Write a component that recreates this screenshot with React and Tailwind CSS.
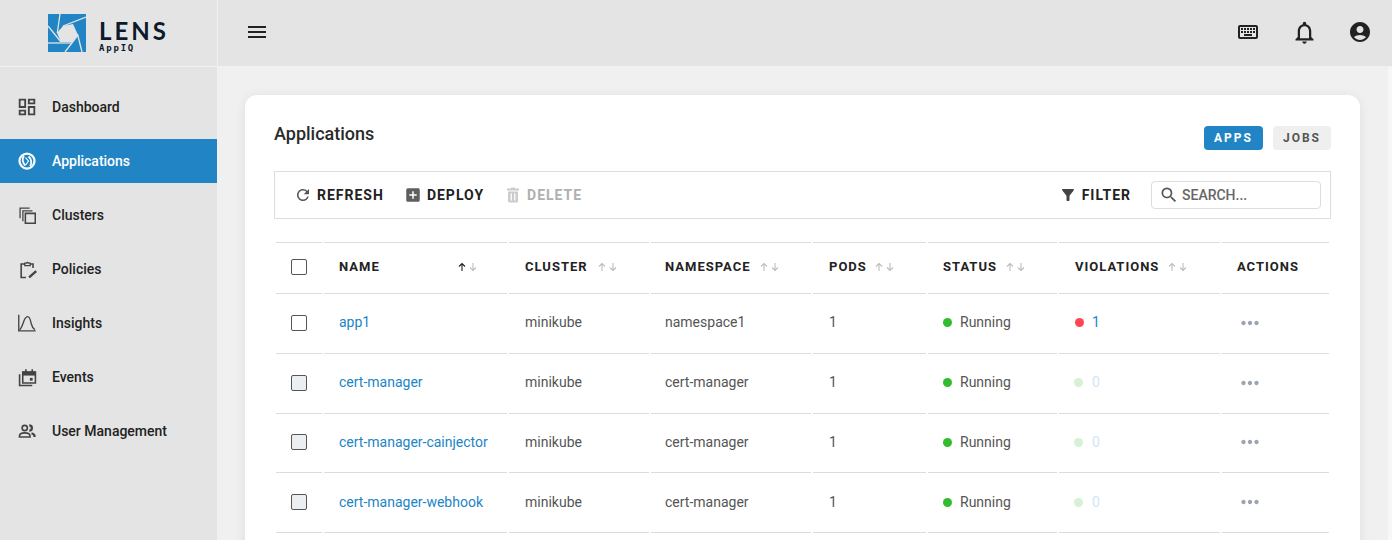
import {
  MdOutlineDashboard,
  MdMenu,
  MdOutlineKeyboard,
  MdNotificationsNone,
  MdAccountCircle,
  MdRefresh,
  MdAddBox,
  MdFilterAlt,
  MdSearch,
  MdMoreHoriz,
} from "react-icons/md";

function AppsIcon({ className }) {
  return (
    <svg viewBox="0 0 24 24" className={className} fill="none" stroke="currentColor">
      <circle cx="12" cy="12" r="10" strokeWidth="3" />
      <path d="M8 5.500C5 9 6 15 10 18M16 18.500c3-3.500 2-9.500-2-12.500" strokeWidth="2.400" />
      <path d="M10 7.500 14 12l-3.500 5" strokeWidth="1.500" />
    </svg>
  );
}

function ClustersIcon({ className }) {
  return (
    <svg viewBox="0 0 24 24" className={className} fill="none" stroke="currentColor" strokeWidth="1.800">
      <path d="M9 9h14v14H9z" strokeWidth="2.200" />
      <path d="M5.500 20V5.500H19" />
      <path d="M1.500 16V1.500H15" />
    </svg>
  );
}

function PoliciesIcon({ className }) {
  return (
    <svg viewBox="0 0 24 24" className={className} fill="none" stroke="currentColor" strokeWidth="2">
      <path d="M19 10V5h-4M9 5H4v17h6" />
      <path d="M8.500 7V4H11a1 1 0 0 1 2 0h2.500v3z" strokeWidth="1.500" />
      <path d="m14 22 9-8" strokeWidth="3" />
    </svg>
  );
}

function InsightsIcon({ className }) {
  return (
    <svg viewBox="0 0 24 24" className={className} fill="none" stroke="currentColor" strokeWidth="1.800">
      <path d="M1 1v21.500h22.500" />
      <path d="M2 21c3-2 4-7 6-12 1.200-3 2.700-5.500 5-5.500 2.800 0 3.700 5.500 4.700 9.500 .7 3 2 6 4.800 8" />
    </svg>
  );
}

function EventsIcon({ className }) {
  return (
    <svg viewBox="0 0 24 24" className={className} fill="none" stroke="currentColor">
      <path d="M6 5h16v14H6z" strokeWidth="2" />
      <path d="M6 5h16v4H6z" fill="currentColor" strokeWidth="1" />
      <path d="M10 1.500V5M18 1.500V5" strokeWidth="2" />
      <path d="M2 8v14h16" strokeWidth="2" />
      <rect x="15" y="12.500" width="3.500" height="3.500" fill="currentColor" stroke="none" />
    </svg>
  );
}

function UsersIcon({ className }) {
  return (
    <svg viewBox="0 0 24 24" className={className} fill="none" stroke="currentColor" strokeWidth="2.200">
      <circle cx="9" cy="8" r="3.500" />
      <path d="M2 20v-1.500c0-2.500 3.500-4 7-4s7 1.500 7 4V20z" />
      <path d="M15 4.500a3.500 3.500 0 0 1 0 7" strokeWidth="3" />
      <path d="M18 15c2.500.7 4 2 4 3.500V20" strokeWidth="3" />
    </svg>
  );
}

function TrashIcon({ className }) {
  return (
    <svg viewBox="0 0 18 18" className={className}>
      <path d="M3 2.500h3.500L7.500 1.500h3l1 1H15V4.500H3zM4 5.500h10V15a1.500 1.500 0 0 1-1.500 1.500h-7A1.500 1.500 0 0 1 4 15z" fill="currentColor" />
      <path d="M7.200 7.500v7M10.800 7.500v7" stroke="#ffffff" strokeWidth="1.300" />
    </svg>
  );
}

function SortArrows({ active }) {
  return (
    <svg width="19" height="10" viewBox="0 0 19 10" fill="none" strokeWidth="1.100" className="shrink-0">
      <path d="M4 9V1.500M1 4.500l3-3 3 3" stroke={active ? "#222222" : "#bdbdbd"} />
      <path d="M15 1v7.500M12 5.500l3 3 3-3" stroke="#bdbdbd" />
    </svg>
  );
}

function LensLogo() {
  return (
    <div className="flex items-center">
      <svg width="38" height="38" viewBox="0 0 38 38" className="shrink-0">
        <rect width="38" height="38" fill="#2185c5" />
        <polygon points="15,12 25,10 30,21 24,28 13,28 9,19" fill="#e4e4e4" />
        <g stroke="#e4e4e4" strokeWidth="1.300">
          <path d="M12 0 9.300 19" />
          <path d="M38 3 15 12" />
          <path d="M29.500 20 34 38" />
          <path d="M30 21 17 38" />
          <path d="M0 29h24" />
          <path d="M0 12 13 28" />
        </g>
      </svg>
      <div className="ml-[13px] flex flex-col text-[#0c1a2b]">
        <span className="mt-[6px] font-['Lato',sans-serif] text-[24px] leading-[22px] font-bold tracking-[3px]">LENS</span>
        <span className="mt-[1px] font-['DejaVu_Sans_Mono',monospace] text-[9px] leading-[10px] font-bold tracking-[1.800px]">AppIQ</span>
      </div>
    </div>
  );
}

const navItems = [
  { label: "Dashboard", Icon: MdOutlineDashboard, size: "size-[22px]" },
  { label: "Applications", Icon: AppsIcon, size: "size-[18px]", active: true },
  { label: "Clusters", Icon: ClustersIcon, size: "size-[17px]" },
  { label: "Policies", Icon: PoliciesIcon, size: "size-[19px]" },
  { label: "Insights", Icon: InsightsIcon, size: "size-[18px]" },
  { label: "Events", Icon: EventsIcon, size: "size-[19px]" },
  { label: "User Management", Icon: UsersIcon, size: "size-[18px]" },
];

const columns = [
  { label: "NAME", pad: "pl-[15px]", arrows: "mr-[30px] ml-auto", active: true },
  { label: "CLUSTER", pad: "pl-[16px]", arrows: "ml-[10px]" },
  { label: "NAMESPACE", pad: "pl-[14px]", arrows: "ml-[9px]" },
  { label: "PODS", pad: "pl-[16px]", arrows: "ml-[8px]" },
  { label: "STATUS", pad: "pl-[15px]", arrows: "ml-[9px]" },
  { label: "VIOLATIONS", pad: "pl-[16px]", arrows: "ml-[9px]" },
  { label: "ACTIONS", pad: "pl-[15px]" },
];

const apps = [
  { name: "app1", namespace: "namespace1", violations: 1 },
  { name: "cert-manager", namespace: "cert-manager", violations: 0 },
  { name: "cert-manager-cainjector", namespace: "cert-manager", violations: 0 },
  { name: "cert-manager-webhook", namespace: "cert-manager", violations: 0 },
];

const gridCols = "grid grid-cols-[46px_183px_140px_160px_113px_129px_161px_107px] gap-x-[2px]";
const cell = "flex items-center border-b border-[#dcdcdc] pb-[1px]";

function Sidebar() {
  return (
    <aside className="w-[218px] shrink-0 border-r border-[#f0f0f0] bg-[#e4e4e4] pt-[18px]">
      <nav className="flex flex-col gap-[10px]">
        {navItems.map(({ label, Icon, size, active }) => (
          <a
            key={label}
            className={
              "flex h-[44px] items-center pl-[16px] text-[14px] font-medium " +
              (active ? "bg-[#2185c5] text-white" : "text-[#222222]")
            }
          >
            <span className={"mr-[14px] flex w-[22px] justify-center " + (active ? "text-white" : "text-[#444444]")}>
              <Icon className={size} />
            </span>
            {label}
          </a>
        ))}
      </nav>
    </aside>
  );
}

function Toolbar() {
  const action = "flex items-center gap-[6px] text-[14px] font-bold tracking-[1px]";
  return (
    <div className="mt-[21px] flex h-[48px] items-center border border-[#dddddd] pr-[9px] pl-[20px]">
      <button className={action + " text-[#222222]"}>
        <MdRefresh className="-mx-[1px] size-[18px] text-[#555555]" />
        REFRESH
      </button>
      <button className={action + " ml-[21px] text-[#222222]"}>
        <MdAddBox className="-mx-[1px] size-[18px] text-[#5f5f5f]" />
        DEPLOY
      </button>
      <button className={action + " ml-[21px] text-[#b0b0b0]"}>
        <TrashIcon className="-mx-[1px] size-[18px] text-[#cccccc]" />
        DELETE
      </button>
      <button className={action + " ml-auto text-[#222222]"}>
        <MdFilterAlt className="-mx-[1px] size-[18px] text-[#444444]" />
        FILTER
      </button>
      <div className="ml-[20px] flex h-[28px] w-[170px] items-center rounded-[4px] border border-[#dddddd] pl-[7px]">
        <MdSearch className="size-[20px] shrink-0 text-[#555555]" />
        <span className="ml-[3px] text-[14px] font-medium text-[#666666]">SEARCH...</span>
      </div>
    </div>
  );
}

function AppsTable() {
  return (
    <div className="mt-[23px] ml-[2px] w-[1053px] text-[14px] text-[#555555]">
      <div className={gridCols + " h-[52px]"}>
        <div className="flex items-center border-y border-[#dcdcdc] pb-[2px] pl-[15px]">
          <span className="size-[16px] rounded-[2px] border border-[#555555]" />
        </div>
        {columns.map((c) => (
          <div
            key={c.label}
            className={
              "flex items-center border-y border-[#dcdcdc] pb-[2px] text-[13px] font-bold tracking-[1px] text-[#222222] " + c.pad
            }
          >
            {c.label}
            {c.arrows && (
              <span className={c.arrows}>
                <SortArrows active={c.active} />
              </span>
            )}
          </div>
        ))}
      </div>
      {apps.map((app, i) => (
        <div key={app.name} className={gridCols + " h-[59.75px]"}>
          <div className={cell + " pl-[15px]"}>
            <span className={"size-[16px] rounded-[2px] border border-[#555555] " + (i > 0 ? "bg-[#eceff1]" : "")} />
          </div>
          <div className={cell + " pl-[15px] text-[#2185c5]"}>{app.name}</div>
          <div className={cell + " pl-[16px]"}>minikube</div>
          <div className={cell + " pl-[14px]"}>{app.namespace}</div>
          <div className={cell + " pl-[16px]"}>1</div>
          <div className={cell + " pl-[15px]"}>
            <span className="mr-[8px] size-[9px] rounded-full bg-[#31bb2f]" />
            Running
          </div>
          <div className={cell + " pl-[16px]"}>
            {app.violations > 0 ? (
              <>
                <span className="mr-[8px] size-[9px] rounded-full bg-[#ff4550]" />
                <span className="text-[#2185c5]">1</span>
              </>
            ) : (
              <>
                <span className="mr-[9px] -ml-[1px] size-[9px] rounded-full bg-[#d6f1d5]" />
                <span className="text-[#d2e6f3]">0</span>
              </>
            )}
          </div>
          <div className={cell + " pl-[15px]"}>
            <MdMoreHoriz className="size-[26px] text-[#9aa5b1]" />
          </div>
        </div>
      ))}
    </div>
  );
}

export default function App() {
  return (
    <div className="flex h-[540px] flex-col overflow-hidden bg-[#f0f0f0] font-['Roboto',sans-serif]">
      <header className="flex h-[67px] shrink-0 items-center border-b border-[#f0f0f0] bg-[#e4e4e4] text-[#222222]">
        <div className="flex h-full w-[218px] shrink-0 items-center border-r border-[#f0f0f0] pl-[48px]">
          <LensLogo />
        </div>
        <button className="mb-[2px] ml-[27px]">
          <MdMenu className="size-[24px]" />
        </button>
        <div className="mr-[20px] mb-[2px] ml-auto flex items-center gap-[32px]">
          <MdOutlineKeyboard className="size-[24px]" />
          <MdNotificationsNone className="-mx-[1.5px] size-[27px]" />
          <MdAccountCircle className="size-[24px]" />
        </div>
      </header>
      <div className="flex min-h-0 flex-1">
        <Sidebar />
        <main className="min-w-0 flex-1 pt-[28px] pl-[27px]">
          <section className="w-[1115px] rounded-[12px] bg-white px-[29px] pt-[26px] pb-[32px] shadow-[0_2px_12px_rgba(0,0,0,0.08)]">
            <div className="flex items-start justify-between">
              <h1 className="text-[18px] leading-[26px] font-medium text-[#2a2a2a]">Applications</h1>
              <div className="mt-[5px] flex gap-[10px]">
                <button className="h-[24px] w-[59px] rounded-[4px] bg-[#2185c5] text-[12px] font-bold tracking-[2px] text-white">
                  APPS
                </button>
                <button className="h-[24px] w-[58px] rounded-[4px] bg-[#efefef] text-[12px] font-bold tracking-[2px] text-[#555555]">
                  JOBS
                </button>
              </div>
            </div>
            <Toolbar />
            <AppsTable />
          </section>
        </main>
        <div className="w-[4px] shrink-0 bg-[#f7f7f7]" />
      </div>
    </div>
  );
}
